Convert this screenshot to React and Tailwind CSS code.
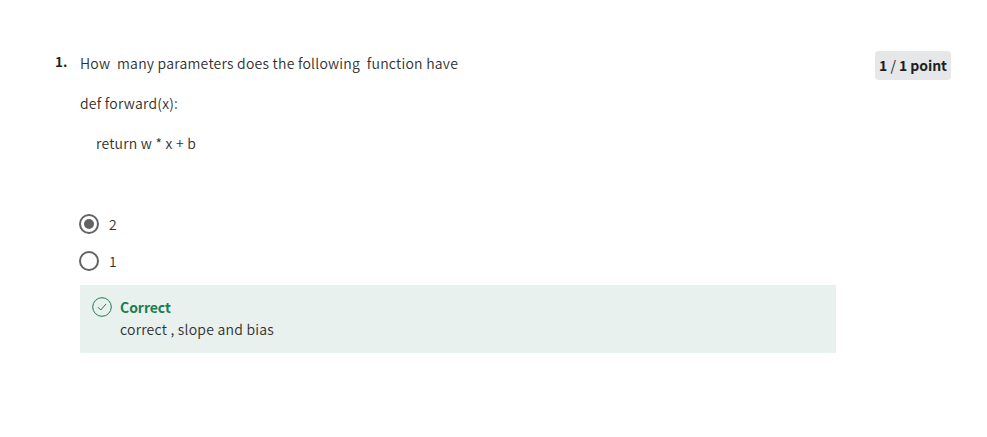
function Radio({ checked, label }) {
  return (
    <label className="flex h-5 items-center">
      <span className="-ml-px flex size-5 shrink-0 items-center justify-center rounded-full border-2 border-[#636363]">
        {checked && <span className="size-2.5 rounded-full bg-[#636363]" />}
      </span>
      <span className="ml-2.5 tracking-normal">{label}</span>
    </label>
  );
}

export default function App() {
  return (
    <main className="flex h-[437px] w-[987px] items-start bg-white pt-[51px] pl-[55px] font-['Noto_Sans_CJK_SC','Source_Sans_Pro',sans-serif] text-[14px] leading-6 font-[350] tracking-[0.235px] text-[#303030]">
      <div className="w-[25px] text-[13.5px] leading-[21px] font-bold tracking-normal text-[#1f1f1f]">1.</div>
      <div className="w-[756px]">
        <div className="space-y-4 whitespace-pre">
          <p>{"How  many parameters does the following  function have"}</p>
          <p>def forward(x):</p>
          <p className="pl-4">return w * x + b</p>
        </div>
        <div className="mt-[59px] space-y-[17px]">
          <Radio checked label="2" />
          <Radio label="1" />
        </div>
        <section className="mt-[14px] flex h-[68px] bg-[#e8f1ee] pt-3 pl-3">
          <svg className="size-5 shrink-0" viewBox="0 0 20 20" fill="none" stroke="#1d7c50">
            <circle cx="10" cy="10" r="9.3" />
            <path d="m6 10.2 2.8 2.8L14 7" />
          </svg>
          <div className="-mt-px ml-2 leading-[22px]">
            <p className="font-bold tracking-[-0.05px] text-[#1d7c50]">Correct</p>
            <p>correct , slope and bias</p>
          </div>
        </section>
      </div>
      <div className="ml-[39px] flex h-[29px] w-[76px] justify-center rounded-[4px] bg-[#e5e7e8] pt-0.5 leading-6 font-bold tracking-[-0.05px] whitespace-pre text-[#1f1f1f]">
        1 <span className="font-normal">/</span> 1 point
      </div>
    </main>
  );
}
